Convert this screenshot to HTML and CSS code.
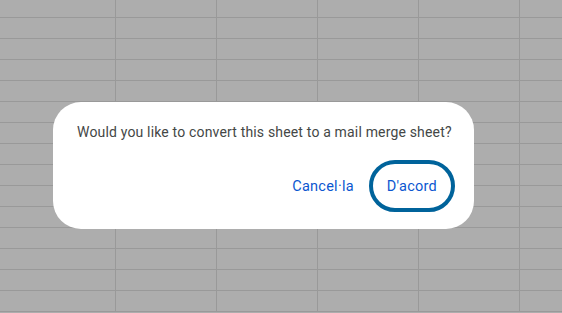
FILE: index.html
```html
<!DOCTYPE html>
<html lang="ca">
<head>
    <meta charset="UTF-8">
    <meta name="viewport" content="width=device-width, initial-scale=1.0">
    <title>Mail merge</title>
    <link rel="stylesheet" href="styles.css">
</head>
<body>
    <div class="page">
        <div class="sheet">
            <div class="cell"></div><div class="cell"></div><div class="cell"></div><div class="cell"></div><div class="cell"></div><div class="cell"></div>
            <div class="cell"></div><div class="cell"></div><div class="cell"></div><div class="cell"></div><div class="cell"></div><div class="cell"></div>
            <div class="cell"></div><div class="cell"></div><div class="cell"></div><div class="cell"></div><div class="cell"></div><div class="cell"></div>
            <div class="cell"></div><div class="cell"></div><div class="cell"></div><div class="cell"></div><div class="cell"></div><div class="cell"></div>
            <div class="cell"></div><div class="cell"></div><div class="cell"></div><div class="cell"></div><div class="cell"></div><div class="cell"></div>
            <div class="cell"></div><div class="cell"></div><div class="cell"></div><div class="cell"></div><div class="cell"></div><div class="cell"></div>
            <div class="cell"></div><div class="cell"></div><div class="cell"></div><div class="cell"></div><div class="cell"></div><div class="cell"></div>
            <div class="cell"></div><div class="cell"></div><div class="cell"></div><div class="cell"></div><div class="cell"></div><div class="cell"></div>
            <div class="cell"></div><div class="cell"></div><div class="cell"></div><div class="cell"></div><div class="cell"></div><div class="cell"></div>
            <div class="cell"></div><div class="cell"></div><div class="cell"></div><div class="cell"></div><div class="cell"></div><div class="cell"></div>
            <div class="cell"></div><div class="cell"></div><div class="cell"></div><div class="cell"></div><div class="cell"></div><div class="cell"></div>
            <div class="cell"></div><div class="cell"></div><div class="cell"></div><div class="cell"></div><div class="cell"></div><div class="cell"></div>
            <div class="cell"></div><div class="cell"></div><div class="cell"></div><div class="cell"></div><div class="cell"></div><div class="cell"></div>
            <div class="cell"></div><div class="cell"></div><div class="cell"></div><div class="cell"></div><div class="cell"></div><div class="cell"></div>
            <div class="cell"></div><div class="cell"></div><div class="cell"></div><div class="cell"></div><div class="cell"></div><div class="cell"></div>
        </div>

        <div class="dialog" role="dialog">
            <p class="message">Would you like to convert this sheet to a mail merge sheet?</p>
            <div class="actions">
                <button class="btn">Cancel·la</button>
                <button class="btn focused">D'acord</button>
            </div>
        </div>
    </div>
</body>
</html>
```

FILE: styles.css
```css
html, body{
    margin:0;
    padding:0;
}
body{
    background-color:#adadad;
    font-family: Roboto, "Liberation Sans", sans-serif;
}

.page{
    position:relative;
    width:562px;
    height:313px;
    overflow:hidden;
}

.sheet{
    display:grid;
    grid-template-columns: 116px repeat(4, 101px) 42px;
    grid-template-rows: repeat(15, 21px);
    margin-top:-3px;
    height:316px;
    overflow:hidden;
}
.cell{
    border-right:1px solid #999999;
    border-bottom:1px solid #999999;
}
.cell:nth-child(6n){
    border-right:none;
}

.dialog{
    position:absolute;
    left:53px;
    top:102px;
    width:421px;
    height:127px;
    box-sizing:border-box;
    background-color:white;
    border-radius:28px;
    padding:20px 25px 23px 24px;
    display:flex;
    flex-direction:column;
}
.message{
    margin:0;
    font-size:14px;
    line-height:20px;
    color:#444746;
    letter-spacing:0.17px;
    white-space:nowrap;
}
.actions{
    margin-top:auto;
    display:flex;
    justify-content:flex-end;
    gap:9px;
}
.btn{
    height:40px;
    padding:0 12px;
    border:none;
    border-radius:20px;
    background:none;
    font-family: Roboto, "Liberation Sans", sans-serif;
    font-size:14.5px;
    font-weight:400;
    letter-spacing:0.25px;
    color:#0b57d0;
}
.focused{
    outline:4px solid #00639b;
    outline-offset:2px;
}
```
